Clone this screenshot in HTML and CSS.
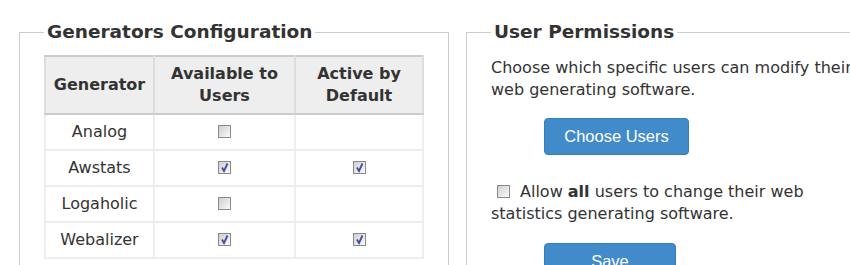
FILE: index.html
```html
<!DOCTYPE html>
<html lang="en">
<head>
    <meta charset="UTF-8">
    <title>Statistics Generators</title>
    <link rel="stylesheet" href="styles.css">
</head>
<body>

    <div class="page">

        <!-- Generators -->
        <fieldset class="panel">
            <legend>Generators Configuration</legend>
            <table class="generators">
                <thead>
                    <tr>
                        <th class="col-name">Generator</th>
                        <th class="col-avail">Available to Users</th>
                        <th class="col-active">Active by Default</th>
                    </tr>
                </thead>
                <tbody>
                    <tr>
                        <td>Analog</td>
                        <td><span class="check"></span></td>
                        <td></td>
                    </tr>
                    <tr>
                        <td>Awstats</td>
                        <td><span class="check on"><svg viewBox="0 0 11 11"><path d="M3 5.5 L5 9 L8.5 1.5"/></svg></span></td>
                        <td><span class="check on"><svg viewBox="0 0 11 11"><path d="M3 5.5 L5 9 L8.5 1.5"/></svg></span></td>
                    </tr>
                    <tr>
                        <td>Logaholic</td>
                        <td><span class="check"></span></td>
                        <td></td>
                    </tr>
                    <tr>
                        <td>Webalizer</td>
                        <td><span class="check on"><svg viewBox="0 0 11 11"><path d="M3 5.5 L5 9 L8.5 1.5"/></svg></span></td>
                        <td><span class="check on"><svg viewBox="0 0 11 11"><path d="M3 5.5 L5 9 L8.5 1.5"/></svg></span></td>
                    </tr>
                </tbody>
            </table>
        </fieldset>

        <!-- Permissions -->
        <fieldset class="panel">
            <legend>User Permissions</legend>
            <p>Choose which specific users can modify their web generating software.</p>
            <button class="btn btn-choose">Choose Users</button>
            <p class="allow"><span class="check"></span>Allow <b>all</b> users to change their web statistics generating software.</p>
            <button class="btn btn-save">Save</button>
        </fieldset>

    </div>

</body>
</html>
```

FILE: styles.css
```css
* {
    box-sizing: border-box;
}
body {
    margin: 0;
    background-color: #fff;
    color: #333;
    font-family: "DejaVu Sans", Verdana, sans-serif;
    font-size: 16px;
    line-height: 22px;
    overflow: hidden;
}
.page {
    display: flex;
    gap: 17px;
    padding: 21px 0 0 19px;
    width: 1000px;
}
.panel {
    flex: 0 0 430px;
    margin: 0;
    padding: 0 24px 20px;
    border: 1px solid #ccc;
}
.panel legend {
    padding: 0 3px;
    font-size: 18.5px;
    font-weight: bold;
    line-height: 22px;
}
.generators {
    width: 100%;
    margin-top: 12px;
    border-collapse: collapse;
    text-align: center;
}
.generators th {
    background-color: #eee;
    padding: 6px 4px;
    line-height: 22px;
    border: 2px solid #ddd;
    border-top-color: #ccc;
    border-bottom-color: #ccc;
}
.generators th + th {
    border-left-color: #ccc;
}
.generators td {
    padding: 7px 4px;
    height: 36px;
    line-height: 20px;
    border: 2px solid #eee;
}
.col-name { width: 109px; }
.col-avail { width: 141px; }
.check {
    display: inline-block;
    width: 13px;
    height: 13px;
    vertical-align: -1px;
    border: 1px solid #8a8a8a;
    background: linear-gradient(135deg, #cfcfcf, #fafafa);
    position: relative;
}
.check svg {
    position: absolute;
    left: 0;
    top: 0;
    width: 11px;
    height: 11px;
    fill: none;
    stroke: #3f4f9e;
    stroke-width: 1.8;
}
.panel p {
    margin: 14px 0 0;
}
.btn {
    display: block;
    height: 37px;
    margin-left: 53px;
    padding: 0;
    background-color: #428bca;
    border: 1px solid #357ebd;
    border-radius: 4px;
    color: #fff;
    font-family: "Liberation Sans", Arial, sans-serif;
    font-size: 16.5px;
}
.btn-choose {
    width: 145px;
    margin-top: 17px;
}
.btn-save {
    width: 132px;
    margin-top: 18px;
}
.allow {
    padding-top: 12px;
}
.allow .check {
    margin: 0 10px 0 6px;
}
.allow b {
    font-weight: bold;
}
```
